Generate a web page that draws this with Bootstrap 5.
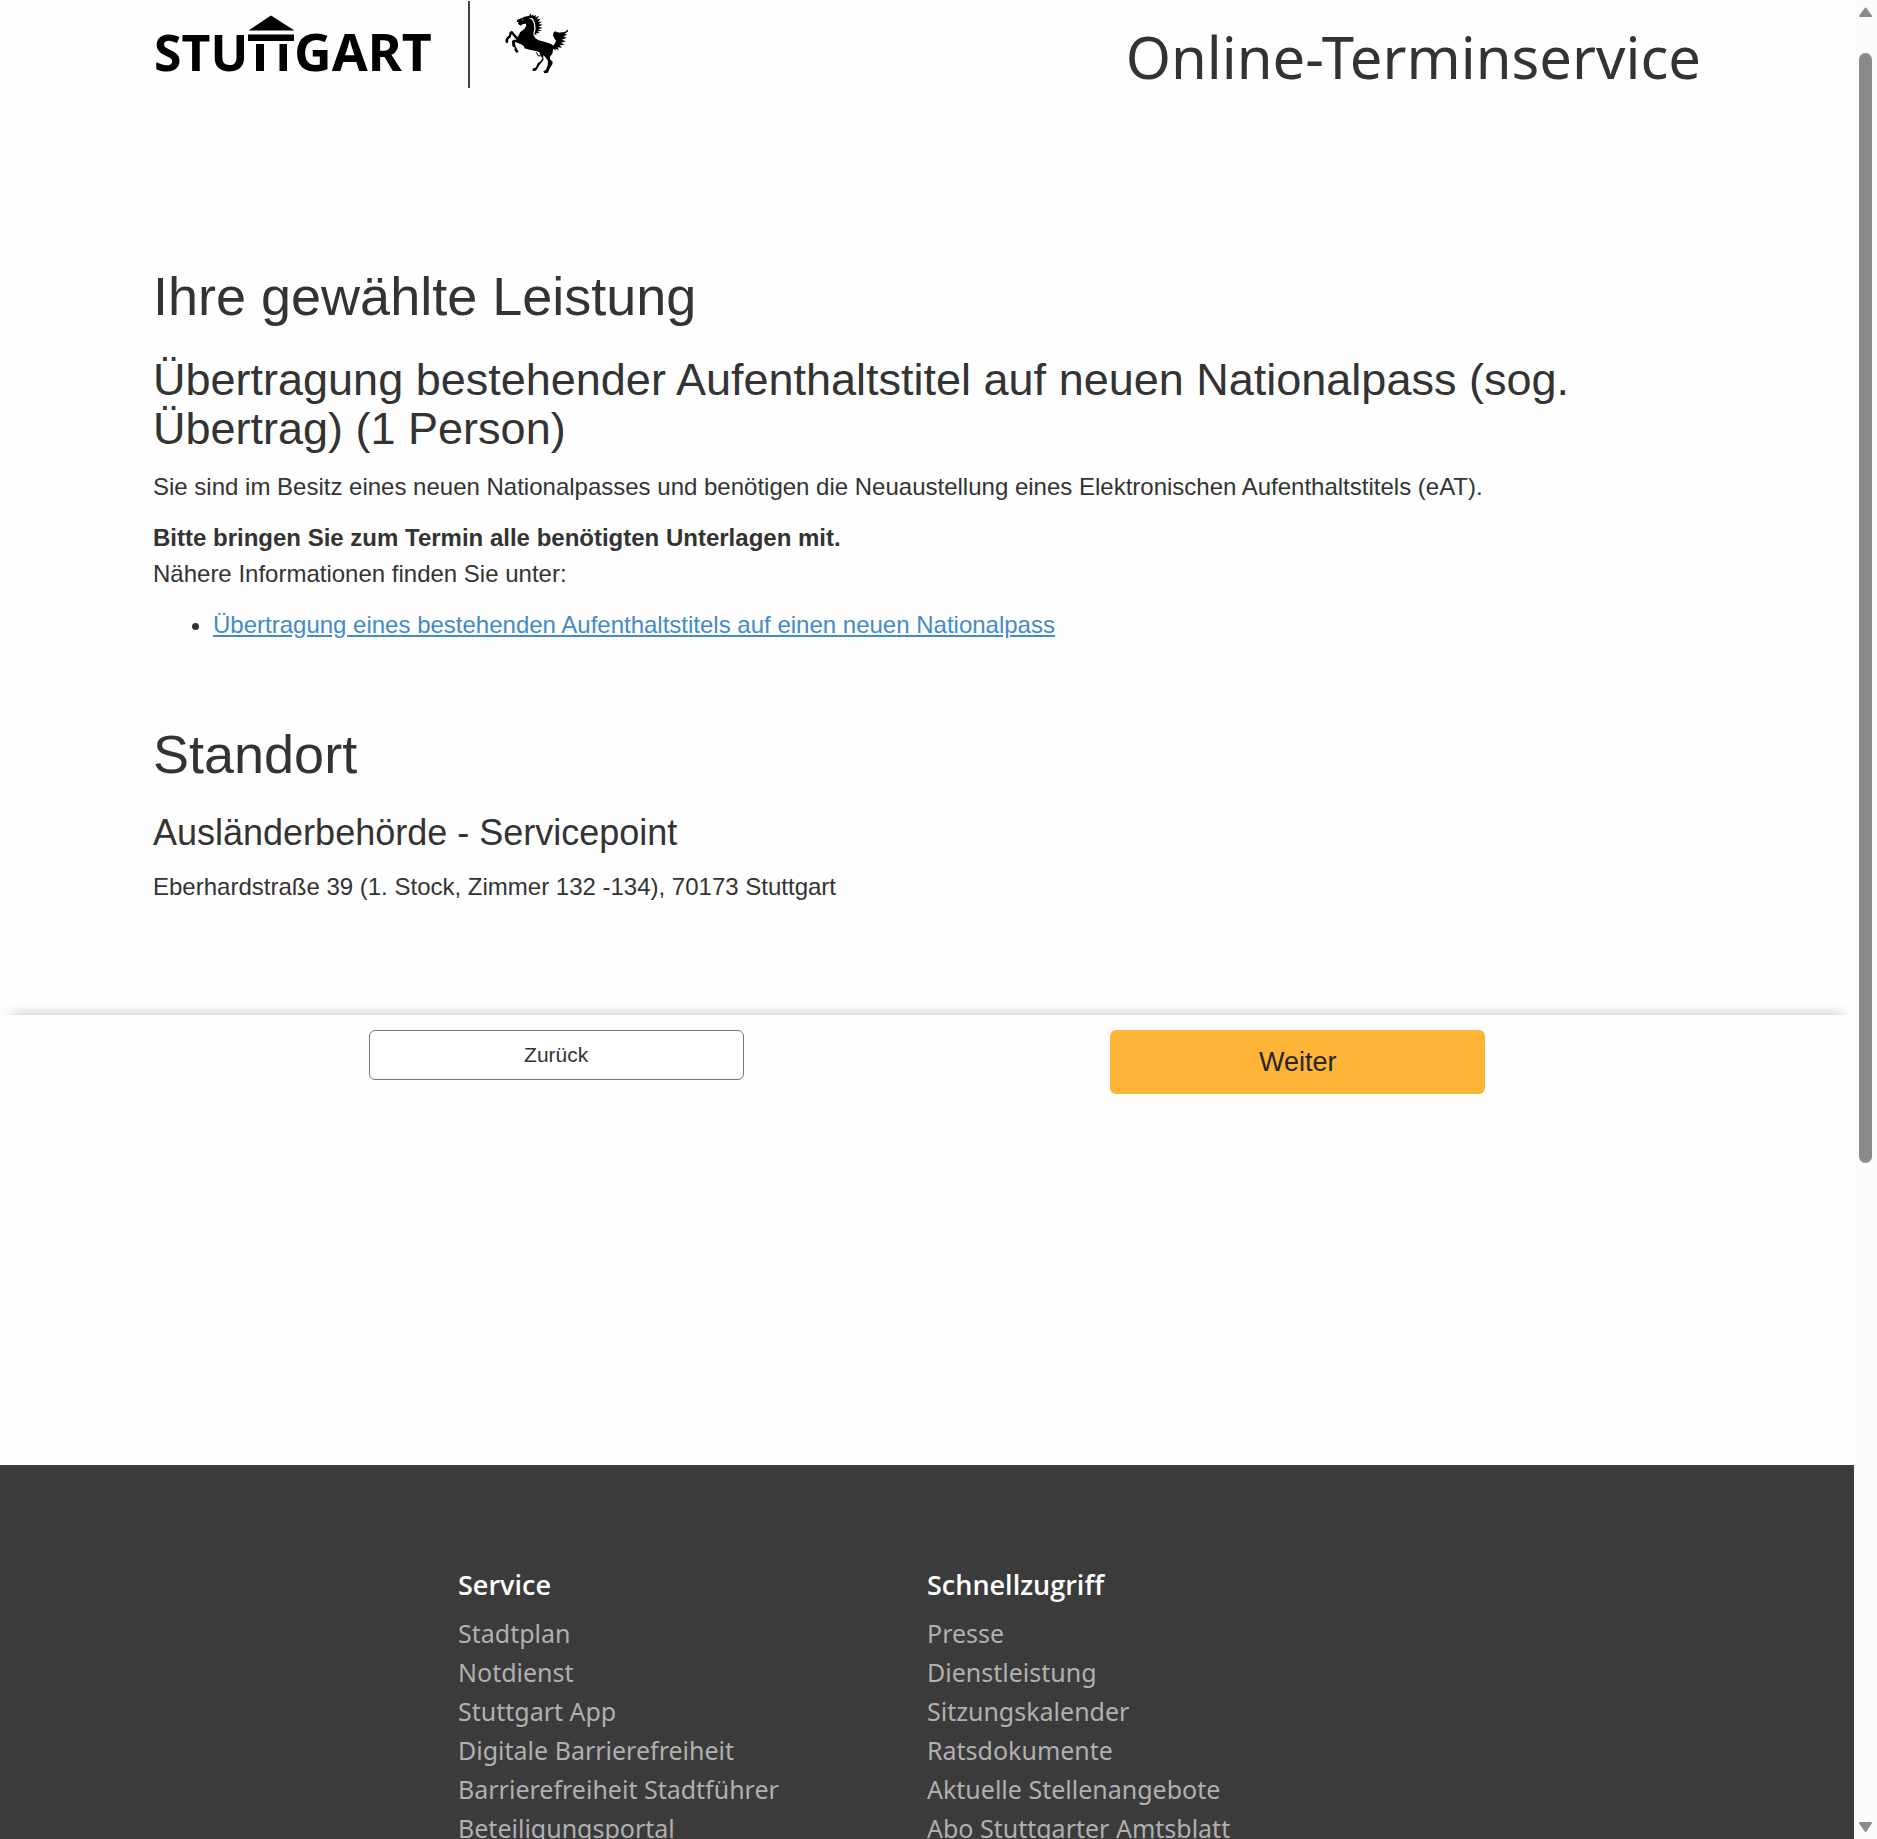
<!DOCTYPE html>
<html lang="de">
<head>
<meta charset="utf-8">
<meta name="viewport" content="width=device-width, initial-scale=1">
<title>Online-Terminservice Stuttgart</title>
<link rel="stylesheet" href="https://cdn.jsdelivr.net/npm/bootstrap@5.3.0/dist/css/bootstrap.min.css">
<style>
  body { font-family: "Liberation Sans", Arial, sans-serif; font-size: 24px; line-height: 36px; color: #333; background: #fefefe; }
  .page-inner { padding: 0 153px; }
  .brand-logo { width: 420px; height: 90px; }
  .brand-logo text { font: 700 50px "Noto Sans", sans-serif; fill: #000; }
  .brand-logo .wide-part { font-size: 52px; }
  .service-title { font: 400 58px/72px "Noto Sans", sans-serif; margin-top: 21px; }
  .site-header { height: 266px; }
  h1, h2, h3 { font-weight: 400; }
  h1 { font-size: 54px; line-height: 60px; margin-bottom: 29px; }
  h2 { font-size: 45px; line-height: 49px; margin-bottom: 16px; }
  h3 { font-size: 36px; line-height: 40px; margin-bottom: 16px; }
  p { margin-bottom: 15px; }
  .info-list { padding-left: 60px; margin-bottom: 81px; }
  .info-list a { color: #428bca; }
  .address { margin-bottom: 110px; }
  .action-bar { background: #fefefe; box-shadow: 0 -12px 12px -12px rgba(0, 0, 0, .26); padding-top: 15px; height: 450px; }
  .action-row { width: 80%; }
  .action-row .btn { width: 375px; border-radius: 6px; }
  .btn-back { font-size: 21px; line-height: 30px; padding: 9px 18px; border: 1px solid #777; color: #333; background: #fff; }
  .btn-next, .btn-next:hover { font-size: 27px; line-height: 36px; padding: 14px 18px; border: 0; color: #262626; background: #ffb437; }
  .site-footer { background: #3b3b3b; font-family: "Noto Sans", sans-serif; padding-top: 100px; height: 500px; }
  .site-footer .row { margin: 0 -11px; }
  .site-footer h4 { font: 600 27px/39px "Open Sans", sans-serif; color: #fff; margin-bottom: 10px; }
  .site-footer li { font-size: 25px; line-height: 39px; }
  .site-footer a { color: #b0b0b0; text-decoration: none; }
  .scroll-rail { width: 23px; background: #fcfcfc; padding: 7px 0 4px; }
  .scroll-thumb { width: 13px; height: 1110px; border-radius: 7px; background: #8b8b8b; margin-top: 35px; }
</style>
<script src="https://cdn.jsdelivr.net/npm/bootstrap@5.3.0/dist/js/bootstrap.bundle.min.js"></script>
</head>
<body>
<div class="d-flex vh-100 overflow-hidden">
  <div class="flex-grow-1 overflow-hidden">
    <header class="site-header page-inner d-flex justify-content-between align-items-start">
      <a href="#" aria-label="Stuttgart">
        <svg class="brand-logo d-block" viewBox="153 0 420 90">
          <text x="154" y="71">STU</text>
          <text class="wide-part" x="294" y="71">GART</text>
          <path d="M271 15.500 294.500 30.500H248.500ZM248 34.500H294V41H248ZM256 44H264V71H256ZM279.500 44H287V71H279.500Z"/>
          <path d="M469 1V88" stroke="#444" stroke-width="2"/>
          <g transform="translate(490 0) scale(.3333)">
            <path d="M121 40 118 47 104 50 94 55 82 59 80 66 86 67 84 72 92 77 99 72 108 71 109 77 103 87 91 96 85 107 84 112 76 104 66 92 59 96 57 106 49 114 46 121 48 129 54 128 55 118 62 112 65 102 73 112 80 119 70 119 66 124 67 139 75 143 73 150 79 158 86 156 81 147 76 137 75 126 84 129 96 134 103 140 103 145 119 149 138 153 149 157 150 165 157 174 153 183 143 190 138 202 128 206 128 213 138 212 143 204 149 194 160 181 160 166 166 171 174 183 173 196 168 209 160 214 163 220 174 218 178 207 187 193 188 185 180 178 180 170 187 161 190 146 197 152 196 146 206 150 203 142 216 143 209 136 224 135 213 128 228 124 215 119 230 113 220 109 232 104 224 101 235 94 231 88 229 94 219 97 205 99 196 94 191 97 189 106 193 115 198 122 196 131 190 137 183 132 166 126 146 121 136 115 131 106 130 98 133 88 132 72 126 59 116 53 128 55 135 70 137 87 133 103 140 105 138 100 149 99 142 94 156 92 144 88 158 84 146 80 158 74 146 72 156 65 144 65 152 56 141 58 147 48 136 52 139 45 130 49 130 43 124 47Z"/>
            <path d="M196 96 209 98 222 98 216 112 210 128 197 140 188 140 199 124 191 108Z"/>
            <path d="M139 157 144 167 151 168" fill="none" stroke="#000" stroke-width="3"/>
            <path d="M96 58 100 61" stroke="#fff" stroke-width="2"/>
          </g>
        </svg>
      </a>
      <div class="service-title">Online-Terminservice</div>
    </header>

    <main>
      <div class="page-inner">
        <h1>Ihre gewählte Leistung</h1>
        <h2>Übertragung bestehender Aufenthaltstitel auf neuen Nationalpass (sog. Übertrag) (1 Person)</h2>
        <p>Sie sind im Besitz eines neuen Nationalpasses und benötigen die Neuaustellung eines Elektronischen Aufenthaltstitels (eAT).</p>
        <p><strong>Bitte bringen Sie zum Termin alle benötigten Unterlagen mit.</strong><br>Nähere Informationen finden Sie unter:</p>
        <ul class="info-list">
          <li><a href="#">Übertragung eines bestehenden Aufenthaltstitels auf einen neuen Nationalpass</a></li>
        </ul>
        <h1>Standort</h1>
        <h3>Ausländerbehörde - Servicepoint</h3>
        <p class="address">Eberhardstraße 39 (1. Stock, Zimmer 132 -134), 70173 Stuttgart</p>
      </div>
      <div class="action-bar">
        <div class="action-row row g-0 mx-auto text-center">
          <div class="col-6"><button type="button" class="btn btn-back">Zurück</button></div>
          <div class="col-6"><button type="button" class="btn btn-next">Weiter</button></div>
        </div>
      </div>
    </main>

    <footer class="site-footer">
      <div class="row g-0">
        <div class="col-3 offset-3">
          <h4>Service</h4>
          <ul class="list-unstyled">
            <li><a href="#">Stadtplan</a></li>
            <li><a href="#">Notdienst</a></li>
            <li><a href="#">Stuttgart App</a></li>
            <li><a href="#">Digitale Barrierefreiheit</a></li>
            <li><a href="#">Barrierefreiheit Stadtführer</a></li>
            <li><a href="#">Beteiligungsportal</a></li>
          </ul>
        </div>
        <div class="col-3">
          <h4>Schnellzugriff</h4>
          <ul class="list-unstyled">
            <li><a href="#">Presse</a></li>
            <li><a href="#">Dienstleistung</a></li>
            <li><a href="#">Sitzungskalender</a></li>
            <li><a href="#">Ratsdokumente</a></li>
            <li><a href="#">Aktuelle Stellenangebote</a></li>
            <li><a href="#">Abo Stuttgarter Amtsblatt</a></li>
          </ul>
        </div>
      </div>
    </footer>
  </div>

  <div class="scroll-rail d-flex flex-column align-items-center flex-shrink-0" aria-hidden="true">
    <svg width="15" height="11" viewBox="0 0 15 11"><path d="M7.500 1.500 13 9H2Z" fill="#8b8b8b" stroke="#8b8b8b" stroke-width="2" stroke-linejoin="round"/></svg>
    <div class="scroll-thumb"></div>
    <svg class="mt-auto" width="15" height="14" viewBox="0 0 15 14"><path d="M7.500 10 13 2H2Z" fill="#8b8b8b" stroke="#8b8b8b" stroke-width="2" stroke-linejoin="round"/></svg>
  </div>
</div>
</body>
</html>
